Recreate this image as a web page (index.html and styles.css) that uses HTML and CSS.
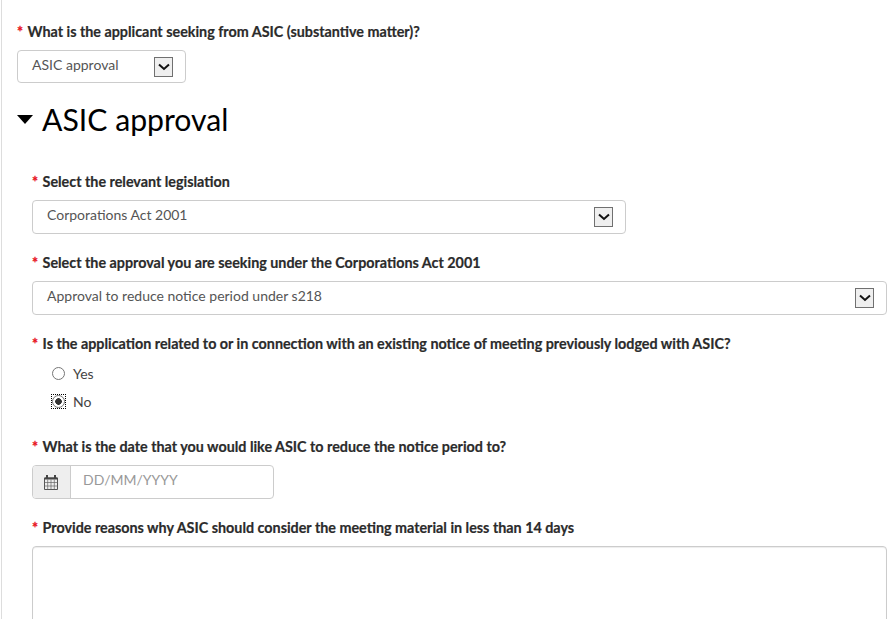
FILE: index.html
```html
<!doctype html>
<html>
<head>
<meta charset="utf-8">
<title>ASIC approval</title>
<link rel="stylesheet" href="styles.css">
</head>

<body>
<div class="page">
    <div class="field first">
        <div class="label"><span class="req">*</span> What is the applicant seeking from ASIC (substantive matter)?</div>
        <div class="select small">
            <span class="value">ASIC approval</span>
            <span class="arrow"><svg width="12" height="8" viewBox="0 0 12 8"><path d="M1 1.5L6 6L11 1.5" fill="none" stroke="#111" stroke-width="2"/></svg></span>
        </div>
    </div>

    <h1 class="title"><span class="caret"></span>ASIC approval</h1>

    <div class="section">
        <div class="field f1">
            <div class="label"><span class="req">*</span> Select the relevant legislation</div>
            <div class="select mid">
                <span class="value">Corporations Act 2001</span>
                <span class="arrow"><svg width="12" height="8" viewBox="0 0 12 8"><path d="M1 1.5L6 6L11 1.5" fill="none" stroke="#111" stroke-width="2"/></svg></span>
            </div>
        </div>

        <div class="field f2">
            <div class="label"><span class="req">*</span> Select the approval you are seeking under the Corporations Act 2001</div>
            <div class="select wide">
                <span class="value">Approval to reduce notice period under s218</span>
                <span class="arrow"><svg width="12" height="8" viewBox="0 0 12 8"><path d="M1 1.5L6 6L11 1.5" fill="none" stroke="#111" stroke-width="2"/></svg></span>
            </div>
        </div>

        <div class="field f3">
            <div class="label"><span class="req">*</span> Is the application related to or in connection with an existing notice of meeting previously lodged with ASIC?</div>
            <div class="radios">
                <div class="radio"><span class="dot"></span>Yes</div>
                <div class="radio on"><span class="focus"><span class="dot"></span></span>No</div>
            </div>
        </div>

        <div class="field f4">
            <div class="label"><span class="req">*</span> What is the date that you would like ASIC to reduce the notice period to?</div>
            <div class="date">
                <span class="cal">
                    <svg width="14" height="15" viewBox="0 0 14 15">
                        <path d="M0.5 3H13.5V14.5H0.5Z" fill="none" stroke="#555"/>
                        <path d="M0.5 2.5H13.5V4.5H0.5Z" fill="#444"/>
                        <path d="M3 0V3M11 0V3" stroke="#444" stroke-width="2"/>
                        <path d="M0.5 7.5H13.5M0.5 11H13.5M3.7 4.5V14.5M7 4.5V14.5M10.3 4.5V14.5" stroke="#666" stroke-width="0.7"/>
                    </svg>
                </span>
                <span class="placeholder">DD/MM/YYYY</span>
            </div>
        </div>

        <div class="field f5">
            <div class="label"><span class="req">*</span> Provide reasons why ASIC should consider the meeting material in less than 14 days</div>
            <div class="textarea"></div>
        </div>
    </div>
</div>
</body>
</html>
```

FILE: styles.css
```css
html,body{
    margin:0;
    padding:0;
    height:100%;
    overflow:hidden;
    background:#fff;
}
body{
    font-family:Lato,"Open Sans",sans-serif;
    color:#333;
    padding-left:1px;
    box-sizing:border-box;
}
.page{
    height:619px;
    overflow:hidden;
    border-left:1px solid #ddd;
    padding-left:15px;
    padding-top:23px;
    box-sizing:border-box;
}
.label{
    font-size:14.33px;
    font-weight:700;
    line-height:18px;
    color:#2b2b2b;
    white-space:nowrap;
    -webkit-text-stroke:0.2px #2b2b2b;
}
.req{
    color:#e8141c;
    -webkit-text-stroke:0.3px #e8141c;
    margin-right:1px;
}
.select{
    height:34px;
    box-sizing:border-box;
    border:1px solid #ccc;
    border-radius:4px;
    background:#fff;
    display:flex;
    align-items:center;
    justify-content:space-between;
    padding:0 12px 0 14px;
    font-size:14px;
    color:#555;
    margin-top:9px;
}
.value{
    margin-bottom:6px;
}
.select.small{
    width:169px;
    height:33px;
    padding-right:12px;
}
.select.small .value{
    margin-bottom:4px;
}
.select.mid{
    width:594px;
}
.select.wide{
    width:855px;
}
.arrow{
    width:19px;
    height:20px;
    box-sizing:border-box;
    border:1px solid #707070;
    background:#efefef;
    display:flex;
    align-items:center;
    justify-content:center;
}
.title{
    margin:14px 0 0 0;
    font-size:30.2px;
    font-weight:400;
    line-height:44px;
    color:#000;
    display:flex;
    align-items:center;
}
.caret{
    width:0;
    height:0;
    border-left:8.5px solid transparent;
    border-right:8.5px solid transparent;
    border-top:9px solid #000;
    margin-right:9px;
}
.section{
    padding-left:15px;
}
.f1{
    margin-top:32px;
}
.f2{
    margin-top:20px;
}
.f3{
    margin-top:20px;
}
.f4{
    margin-top:23px;
}
.f5{
    margin-top:20px;
}
.radios{
    margin-top:6px;
    padding-left:20px;
}
.radio{
    height:28px;
    display:flex;
    align-items:center;
    font-size:14px;
    color:#444;
}
.dot{
    display:block;
    width:13px;
    height:13px;
    box-sizing:border-box;
    border:1px solid #767676;
    border-radius:50%;
    background:#fff;
    margin-right:8px;
    flex:none;
}
.radio.on .dot{
    margin-right:0;
    background:radial-gradient(circle,#333 0,#333 3px,#fff 3.6px);
}
.focus{
    width:13px;
    height:13px;
    margin-right:8px;
    outline:1px dotted #000;
    outline-offset:0;
    display:block;
}
.date{
    width:242px;
    height:34px;
    box-sizing:border-box;
    border:1px solid #ccc;
    border-radius:4px;
    margin-top:9px;
    display:flex;
    overflow:hidden;
    background:#fff;
}
.cal{
    width:35px;
    padding-right:2px;
    background:#eee;
    border-right:1px solid #ccc;
    display:flex;
    align-items:center;
    justify-content:center;
    flex:none;
}
.placeholder{
    font-size:14px;
    color:#999;
    line-height:28px;
    padding-left:12px;
}
.textarea{
    width:855px;
    height:120px;
    box-sizing:border-box;
    border:1px solid #ccc;
    border-radius:4px;
    margin-top:9px;
    box-shadow:inset 0 1px 1px rgba(0,0,0,.075);
}
```
